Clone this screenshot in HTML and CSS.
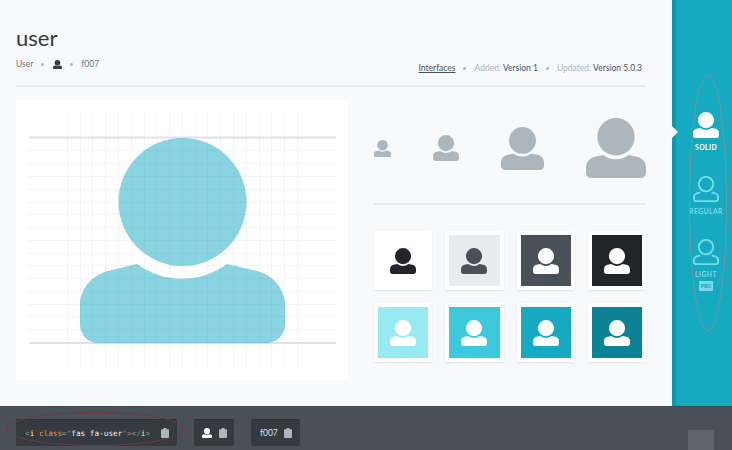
FILE: index.html
```html
<!DOCTYPE html>
<html lang="en">
<head>
  <meta charset="UTF-8">
  <title>user</title>
  <link rel="stylesheet" href="styles.css">
</head>
<body>
  <svg class="defs" width="0" height="0">
    <symbol id="user-solid" viewBox="0 0 205 205">
      <circle cx="102.5" cy="64" r="64"/>
      <path d="M57 126 A76.5 76.5 0 0 0 147 126 L177 133 C193 137 205 151 205 167 V186 C205 197 197 205 186 205 H19 C8 205 0 197 0 186 V167 C0 151 12 137 28 133 Z"/>
    </symbol>
    <symbol id="user-line" viewBox="0 0 205 205">
      <circle cx="102.5" cy="64" r="57" fill="none" stroke="currentColor" stroke-width="15"/>
      <path d="M57 130 L28 137 C15 141 7 152 7 167 V181 C7 191 14 198 24 198 H181 C191 198 198 191 198 181 V167 C198 152 190 141 177 137 L148 130" fill="none" stroke="currentColor" stroke-width="15"/>
    </symbol>
    <symbol id="clip" viewBox="0 0 8 10">
      <path d="M1 1.2 H2.4 V0.6 Q2.4 0 3 0 H5 Q5.6 0 5.6 0.6 V1.2 H7 Q8 1.2 8 2.2 V9 Q8 10 7 10 H1 Q0 10 0 9 V2.2 Q0 1.2 1 1.2 Z"/>
    </symbol>
  </svg>

  <div class="top">
    <main class="main">
      <header class="head">
        <div class="head-left">
          <h1>user</h1>
          <div class="meta">
            <span>User</span><i class="dot"></i>
            <svg class="meta-icon"><use href="#user-solid"/></svg><i class="dot"></i>
            <span>f007</span>
          </div>
        </div>
        <div class="meta meta-right">
          <a href="#">Interfaces</a><i class="dot"></i>
          <span><b>Added:</b> Version 1</span><i class="dot"></i>
          <span><b>Updated:</b> Version 5.0.3</span>
        </div>
      </header>

      <div class="content">
        <div class="panel">
          <svg class="grid" width="332" height="280" viewBox="0 0 332 280">
            <g class="lines">
              <path d="M51.5 12V268M64.5 12V268M76.5 12V268M89.5 12V268M102.5 12V268M115.5 12V268M128.5 12V268M140.5 12V268M153.5 12V268M166.5 12V268M179.5 12V268M191.5 12V268M204.5 12V268M217.5 12V268M230.5 12V268M243.5 12V268M255.5 12V268M268.5 12V268M281.5 12V268"/>
              <path d="M13 50.5H320M13 63.5H320M13 76.5H320M13 89.5H320M13 102.5H320M13 114.5H320M13 127.5H320M13 140.5H320M13 153.5H320M13 165.5H320M13 178.5H320M13 191.5H320M13 204.5H320M13 216.5H320M13 229.5H320"/>
            </g>
            <path class="base" d="M13 37.5H320M13 243H320"/>
            <svg x="64" y="38" width="205" height="205" class="big"><use href="#user-solid"/></svg>
          </svg>
        </div>

        <div class="side">
          <div class="sizes">
            <svg class="s1"><use href="#user-solid"/></svg>
            <svg class="s2"><use href="#user-solid"/></svg>
            <svg class="s3"><use href="#user-solid"/></svg>
            <svg class="s4"><use href="#user-solid"/></svg>
          </div>
          <div class="swatches">
            <div class="card"><div class="sw c-white"><svg><use href="#user-solid"/></svg></div></div>
            <div class="card"><div class="sw c-light"><svg><use href="#user-solid"/></svg></div></div>
            <div class="card"><div class="sw c-gray"><svg><use href="#user-solid"/></svg></div></div>
            <div class="card"><div class="sw c-dark"><svg><use href="#user-solid"/></svg></div></div>
            <div class="card"><div class="sw c-t1"><svg><use href="#user-solid"/></svg></div></div>
            <div class="card"><div class="sw c-t2"><svg><use href="#user-solid"/></svg></div></div>
            <div class="card"><div class="sw c-t3"><svg><use href="#user-solid"/></svg></div></div>
            <div class="card"><div class="sw c-t4"><svg><use href="#user-solid"/></svg></div></div>
          </div>
        </div>
      </div>
    </main>

    <nav class="styles">
      <span class="arrow"></span>
      <span class="oval"></span>
      <a class="style active" href="#"><svg><use href="#user-solid"/></svg><span>SOLID</span></a>
      <a class="style" href="#"><svg><use href="#user-line"/></svg><span>REGULAR</span></a>
      <a class="style" href="#"><svg><use href="#user-line"/></svg><span>LIGHT</span><em>PRO</em></a>
    </nav>
  </div>

  <footer class="bar">
    <span class="red-oval"></span>
    <div class="code code-long">
      <code><s>&lt;</s><u>i</u> <b>class</b><s>=</s><s>"</s>fas fa-user<s>"</s><s>&gt;&lt;/</s><u>i</u><s>&gt;</s></code>
      <svg class="clip"><use href="#clip"/></svg>
    </div>
    <div class="code code-icon">
      <svg class="mini"><use href="#user-solid"/></svg>
      <svg class="clip"><use href="#clip"/></svg>
    </div>
    <div class="code code-uni">
      <span>f007</span>
      <svg class="clip"><use href="#clip"/></svg>
    </div>
    <span class="to-top"></span>
  </footer>
</body>
</html>
```

FILE: styles.css
```css
* {
  box-sizing: border-box;
}

html, body {
  margin: 0;
  height: 450px;
  overflow: hidden;
}

body {
  font-family: "Lato", "Open Sans", sans-serif;
  color: #343a40;
  background: #f8f9fb;
}

.defs {
  position: absolute;
}

.top {
  display: flex;
  height: 406px;
}

/* main column */
.main {
  width: 672px;
  padding: 25px 26px 0 16px;
}

.head {
  display: flex;
  justify-content: space-between;
  align-items: flex-end;
  height: 62px;
  padding-bottom: 13px;
  border-bottom: 2px solid #e9ecef;
}

.head-left {
  margin-bottom: 2px;
}

h1 {
  margin: 0 0 7px;
  font-size: 22px;
  line-height: 26px;
  font-weight: 400;
  color: #343a40;
}

.meta {
  display: flex;
  align-items: center;
  font-size: 8.5px;
  line-height: 12px;
  color: #6c737a;
}

.meta-right {
  margin-bottom: -2px;
  padding-right: 4px;
  color: #495057;
}

.meta-right a {
  color: #495057;
}

.meta-right b {
  font-weight: 400;
  color: #adb5bd;
}

.dot {
  width: 3px;
  height: 3px;
  margin: 0 8px;
  border-radius: 50%;
  background: #adb5bd;
}

.meta-icon {
  width: 9px;
  height: 9px;
  margin-left: 1px;
  fill: #343a40;
}

.content {
  display: flex;
  gap: 26px;
  margin-top: 13px;
}

.panel {
  width: 332px;
  height: 280px;
  background: #fff;
  border-radius: 2px;
}

.grid {
  display: block;
}

.big {
  fill: #14a9c1;
  fill-opacity: .5;
}

.lines path {
  fill: none;
  stroke: #f1f3f5;
  stroke-width: 1;
}

.base {
  fill: none;
  stroke: #dee2e6;
  stroke-width: 2;
}

.side {
  width: 272px;
}

.sizes {
  display: flex;
  align-items: center;
  justify-content: space-between;
  height: 105px;
  padding-bottom: 7px;
  border-bottom: 2px solid #e9ecef;
  fill: #adb5bd;
}

.s1 { width: 17px; height: 17px; }
.s2 { width: 26px; height: 26px; }
.s3 { width: 43px; height: 43px; }
.s4 { width: 60px; height: 60px; }

.swatches {
  display: grid;
  grid-template-columns: repeat(4, 1fr);
  gap: 13px;
  margin-top: 26px;
}

.card {
  padding: 4px;
  height: 59px;
  background: #fff;
  border-radius: 2px;
  box-shadow: 0 1px 2px rgba(52, 58, 64, .12);
}

.sw {
  display: flex;
  align-items: center;
  justify-content: center;
  height: 51px;
  fill: #fff;
}

.sw svg {
  width: 26px;
  height: 26px;
}

.c-white { background: #fff; fill: #212529; }
.c-light { background: #e9ecef; fill: #495057; }
.c-gray { background: #495057; }
.c-dark { background: #212529; }
.c-t1 { background: #99e9f2; }
.c-t2 { background: #3bc9db; }
.c-t3 { background: #15aabf; }
.c-t4 { background: #0b8295; }

/* style switcher */
.styles {
  position: relative;
  display: flex;
  flex-direction: column;
  align-items: center;
  width: 60px;
  padding: 112px 0 0 4px;
  background: #15aabf;
  border-left: 4px solid #0f97ad;
}

.arrow {
  position: absolute;
  left: -4px;
  top: 126px;
  width: 6px;
  height: 12px;
  background: #f8f9fb;
  clip-path: polygon(0 0, 100% 50%, 0 100%);
}

.oval {
  position: absolute;
  left: 13px;
  top: 75px;
  width: 38px;
  height: 256px;
  border: 1px solid #868e96;
  border-radius: 50%;
}

.style {
  display: flex;
  flex-direction: column;
  align-items: center;
  height: 63.5px;
  text-decoration: none;
  color: #7ad9e8;
  fill: #7ad9e8;
}

.style svg {
  width: 26px;
  height: 26px;
}

.style span {
  margin-top: 5px;
  font-size: 6.8px;
  line-height: 8px;
  font-weight: 700;
  letter-spacing: .4px;
}

.style em {
  margin-top: 3px;
  width: 14px;
  height: 10px;
  font-style: normal;
  font-size: 5px;
  line-height: 10px;
  font-weight: 900;
  text-align: center;
  color: #15aabf;
  background: #7ad9e8;
}

.style.active {
  color: #fff;
  fill: #fff;
}

/* code bar */
.bar {
  position: relative;
  display: flex;
  align-items: flex-start;
  gap: 17px;
  height: 44px;
  padding: 12px 0 0 16px;
  background: #495057;
  border-top: 1px solid #43484f;
}

.code {
  display: flex;
  align-items: center;
  justify-content: space-between;
  height: 27px;
  background: #343a40;
  border-top: 1px solid #2b3035;
  border-radius: 2px;
  color: #dee2e6;
}

.code-long { width: 161px; padding: 0 8px 0 9px; }
.code-icon { width: 40px; padding: 0 7px 0 8px; }
.code-uni { width: 49px; padding: 0 8px 0 9px; font-size: 8.5px; }

code {
  font-family: "DejaVu Sans Mono", monospace;
  font-size: 7.7px;
  white-space: pre;
  color: #f1f3f5;
}

code s {
  text-decoration: none;
  color: #868e96;
}

code u {
  text-decoration: none;
  color: #ffe8a1;
}

code b {
  font-weight: 400;
  color: #e8963c;
}

.clip {
  width: 8px;
  height: 10px;
  fill: #adb5bd;
}

.mini {
  width: 10px;
  height: 10px;
  fill: #fff;
}

.to-top {
  position: absolute;
  left: 688px;
  top: 23px;
  width: 26px;
  height: 20px;
  background: #5f636c;
}

.red-oval {
  position: absolute;
  left: 6px;
  top: 5px;
  width: 179px;
  height: 34px;
  border: 1px solid #6e3a40;
  border-radius: 50%;
}
```
